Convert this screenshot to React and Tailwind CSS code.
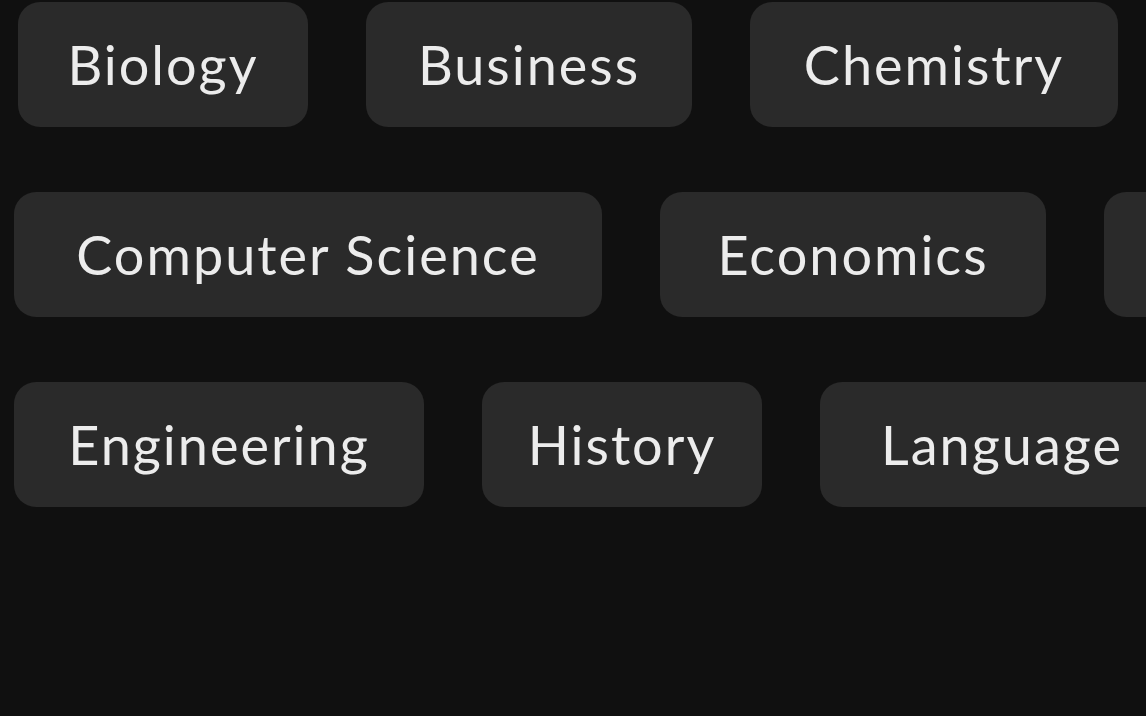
const rows = [
  {
    offset: "ml-[18px]",
    chips: [
      { label: "Biology", w: "w-[290px]" },
      { label: "Business", w: "w-[326px]" },
      { label: "Chemistry", w: "w-[368px]" },
    ],
  },
  {
    offset: "ml-[14px]",
    chips: [
      { label: "Computer Science", w: "w-[588px]" },
      { label: "Economics", w: "w-[386px]" },
      { label: "English", w: "w-[300px]" },
    ],
  },
  {
    offset: "ml-[14px]",
    chips: [
      { label: "Engineering", w: "w-[410px]" },
      { label: "History", w: "w-[280px]" },
      { label: "Language", w: "w-[364px]" },
    ],
  },
];

export default function App() {
  return (
    <div className="w-[1146px] h-[716px] overflow-hidden bg-[#101010] pt-[2px] flex flex-col gap-[65px] font-['Lato','Noto_Sans',sans-serif]">
      {rows.map((row, i) => (
        <div key={i} className={`flex gap-[58px] shrink-0 ${row.offset}`}>
          {row.chips.map(({ label, w }) => (
            <div
              key={label}
              className={`${w} h-[125px] shrink-0 rounded-[22px] bg-[#2a2a2a] flex items-center justify-center text-[#ececec] text-[54px] tracking-[2px] leading-none whitespace-nowrap`}
            >
              {label}
            </div>
          ))}
        </div>
      ))}
    </div>
  );
}
